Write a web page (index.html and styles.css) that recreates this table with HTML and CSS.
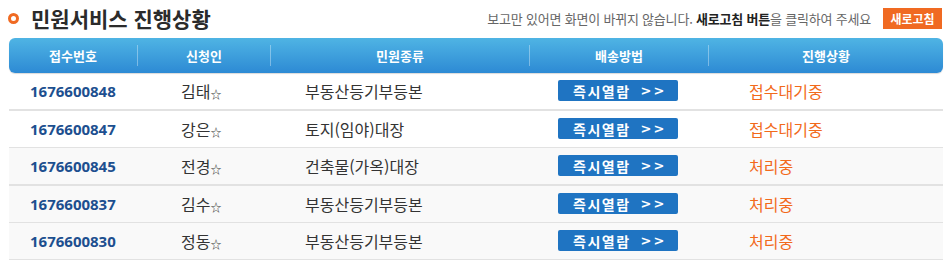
FILE: index.html
```html
<!DOCTYPE html>
<html lang="ko">
<head>
<meta charset="utf-8">
<link rel="stylesheet" href="styles.css">
</head>
<body>
<div class="wrap">
  <div class="top">
    <h1 class="title"><span class="ring"></span>민원서비스 진행상황</h1>
    <div class="notice">
      <span class="msg">보고만 있어면 화면이 바뀌지 않습니다. <b>새로고침 버튼</b>을 클릭하여 주세요</span>
      <button class="refresh">새로고침</button>
    </div>
  </div>
  <div class="table">
    <div class="thead">
      <div class="th">접수번호</div>
      <div class="th sep">신청인</div>
      <div class="th sep">민원종류</div>
      <div class="th sep">배송방법</div>
      <div class="th sep">진행상황</div>
    </div>
    <div class="row">
      <div class="c num">1676600848</div>
      <div class="c name">김태<span class="star">☆</span></div>
      <div class="c kind">부동산등기부등본</div>
      <div class="c ship"><span class="btn">즉시열람<span class="gt">&gt;&gt;</span></span></div>
      <div class="c stat">접수대기중</div>
    </div>
    <div class="row thin">
      <div class="c num">1676600847</div>
      <div class="c name">강은<span class="star">☆</span></div>
      <div class="c kind">토지(임야)대장</div>
      <div class="c ship"><span class="btn">즉시열람<span class="gt">&gt;&gt;</span></span></div>
      <div class="c stat">접수대기중</div>
    </div>
    <div class="row grey">
      <div class="c num">1676600845</div>
      <div class="c name">전경<span class="star">☆</span></div>
      <div class="c kind">건축물(가옥)대장</div>
      <div class="c ship"><span class="btn">즉시열람<span class="gt">&gt;&gt;</span></span></div>
      <div class="c stat">처리중</div>
    </div>
    <div class="row grey thin">
      <div class="c num">1676600837</div>
      <div class="c name">김수<span class="star">☆</span></div>
      <div class="c kind">부동산등기부등본</div>
      <div class="c ship"><span class="btn">즉시열람<span class="gt">&gt;&gt;</span></span></div>
      <div class="c stat">처리중</div>
    </div>
    <div class="row grey">
      <div class="c num">1676600830</div>
      <div class="c name">정동<span class="star">☆</span></div>
      <div class="c kind">부동산등기부등본</div>
      <div class="c ship"><span class="btn">즉시열람<span class="gt">&gt;&gt;</span></span></div>
      <div class="c stat">처리중</div>
    </div>
  </div>
</div>
</body>
</html>
```

FILE: styles.css
```css
* { box-sizing: border-box; }
html, body { margin: 0; padding: 0; background: #fff; }
body { font-family: "Noto Sans CJK KR", "Noto Sans", sans-serif; color: #333; }
.wrap { width: 947px; padding: 0 4px 0 9px; }
.top { display: flex; align-items: center; justify-content: space-between; height: 38px; padding-bottom: 2px; }
.title { margin: 0 0 0 -1px; display: flex; align-items: center; font-size: 21px; font-weight: 700; color: #2b2b2b; letter-spacing: 0; }
.ring { width: 11px; height: 11px; border: 3px solid #f06a22; border-radius: 50%; margin-right: 12px; margin-top: 1px; }
.notice { display: flex; align-items: center; margin-right: 1px; }
.msg { font-size: 13px; color: #666; letter-spacing: -0.2px; }
.msg b { color: #222; font-weight: 700; }
.refresh { margin-left: 12px; border: 0; background: #f06a22; color: #fff; font: 700 12px "Noto Sans CJK KR", sans-serif; height: 21px; width: 59px; padding: 0; }
.table { width: 934px; }
.thead { display: grid; grid-template-columns: 128px 133px 259px 179px 235px; height: 35px; border-radius: 6px; background: linear-gradient(#4fb4e4, #2d8ad4); align-items: center; box-shadow: 0 1px 1px rgba(0,0,0,0.15); }
.th { color: #fff; font-size: 13px; font-weight: 700; text-align: center; height: 21px; line-height: 21px; }
.th.sep { border-left: 1px solid rgba(255,255,255,0.35); }
.row { display: grid; grid-template-columns: 128px 133px 259px 179px 235px; height: 37.5px; align-items: center; border-bottom: 2px solid #e2e2e2; }
.row.thin { border-bottom-width: 1px; }
.row.grey { background: #f9f9f9; }
.c { font-size: 16px; color: #333; white-space: nowrap; }
.num { padding-left: 21px; color: #1d4f8f; font-weight: 700; font-family: "Open Sans", "Noto Sans", sans-serif; font-size: 15px; }
.name { padding-left: 44px; }
.star { font-size: 11px; color: #333; vertical-align: -1px; }
.kind { padding-left: 35px; }
.ship { padding-left: 29px; display: flex; }
.btn { display: flex; align-items: center; width: 120px; height: 21px; border-radius: 2px; background: #1f74c2; color: #fff; font-size: 14px; font-weight: 700; padding-left: 15px; letter-spacing: 1.5px; }
.gt { margin-left: 10px; font-family: "DejaVu Sans", sans-serif; font-size: 13px; letter-spacing: 2px; }
.stat { padding-left: 41px; color: #f26a1b; font-size: 16px; }
```
